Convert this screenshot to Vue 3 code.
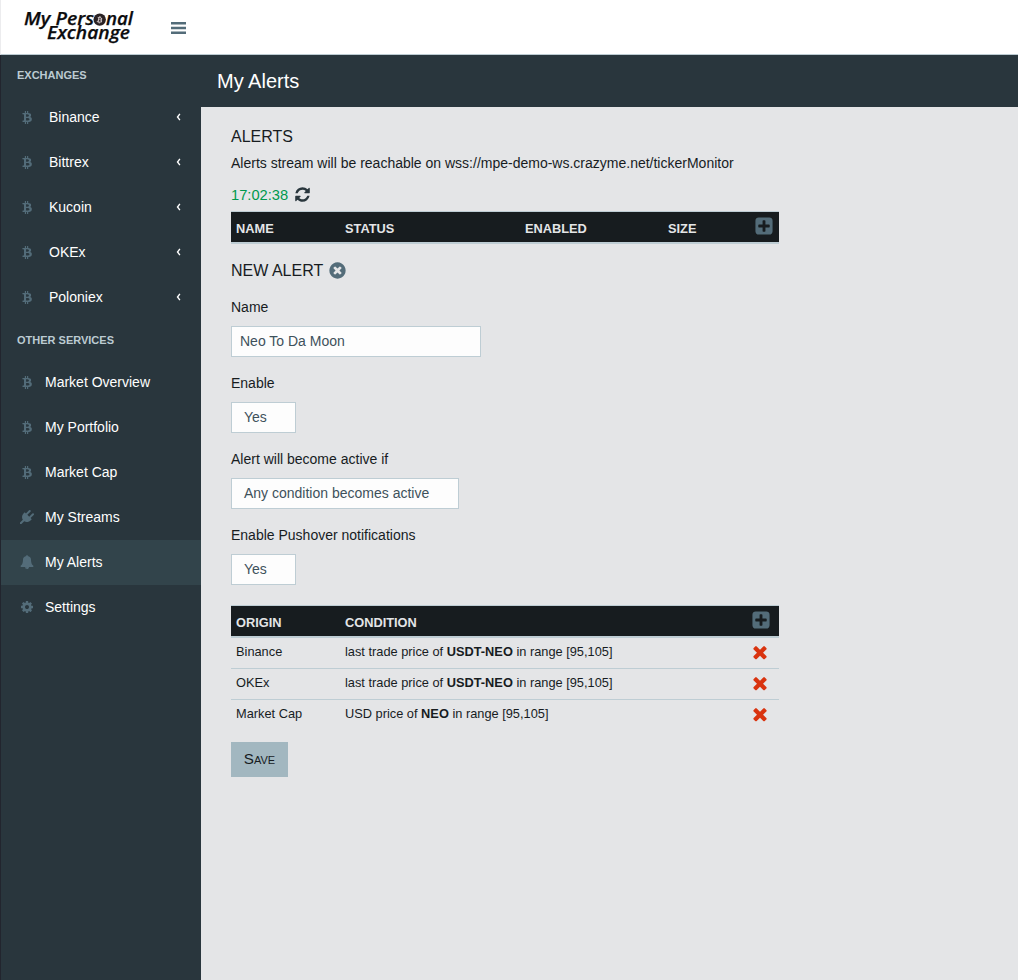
<script setup>
const exchanges = ['Binance', 'Bittrex', 'Kucoin', 'OKEx', 'Poloniex']

const services = [
  { label: 'Market Overview', icon: 'btc' },
  { label: 'My Portfolio', icon: 'btc' },
  { label: 'Market Cap', icon: 'btc' },
  { label: 'My Streams', icon: 'plug' },
  { label: 'My Alerts', icon: 'bell', active: true },
  { label: 'Settings', icon: 'cog' },
]

const conditions = [
  { origin: 'Binance', before: 'last trade price of', pair: 'USDT-NEO', after: 'in range [95,105]' },
  { origin: 'OKEx', before: 'last trade price of', pair: 'USDT-NEO', after: 'in range [95,105]' },
  { origin: 'Market Cap', before: 'USD price of', pair: 'NEO', after: 'in range [95,105]' },
]
</script>

<template>
  <svg class="defs" aria-hidden="true">
    <symbol id="i-btc" viewBox="0 0 1280 1792">
      <path transform="translate(0 1536) scale(1 -1)" d="M1167 896q18 -182 -131 -258q117 -28 175 -103t45 -214q-7 -71 -32.5 -125t-64.5 -89t-97 -58.5t-121.5 -34.5t-145.5 -15v-255h-154v251q-80 0 -122 1v-252h-154v255q-18 0 -54 0.5t-55 0.5h-200l31 183h111q50 0 58 51v402h16q-6 1 -16 1v287q-13 68 -89 68h-111v164l212 -1q64 0 97 1v252h154v-247q82 2 122 2v245h154v-252q79 -7 140 -22.5t113 -45t82.5 -78t36.5 -114.5zM952 351q0 36 -15 64t-37 46t-57.5 30.5t-65.5 18.5t-74 9t-69 3t-64.5 -1t-47.5 -1v-338q8 0 37 -0.5t48 -0.5t53 1.5t58.5 4t57 8.5t55.5 14t47.5 21t39.5 30t24.5 40t9.5 51zM881 827q0 33 -12.5 58.5t-30.5 42t-48 28t-55 16.5t-61.5 8t-58 2.5t-54 -1t-39.5 -0.5v-307q5 0 34.5 -0.5t46.5 0t50 2t55 5.5t51.5 11t48.5 18.5t37 27t27 38.5t9 51z" />
    </symbol>
    <symbol id="i-plug" viewBox="0 0 1792 1792">
      <path d="M1755 453q37 38 37 90.5t-37 90.5l-401 400 150 150-160 160q-163 163-389.5 186.5t-411.5-100.5l-362 362h-181v-181l362-362q-124-185-100.5-411.5t186.5-389.5l160-160 150 150 400-401q38-37 91-37t90 37 37 90.5-37 90.5l-400 401 234 234 401-400q38-37 91-37t90 37z" />
    </symbol>
    <symbol id="i-bell" viewBox="0 0 1792 1792">
      <path d="M912 1696q0-16-16-16-59 0-101.5-42.5t-42.5-101.5q0-16-16-16t-16 16q0 73 51.5 124.5t124.5 51.5q16 0 16-16zm816-288q0 52-38 90t-90 38h-448q0 106-75 181t-181 75-181-75-75-181h-448q-52 0-90-38t-38-90q50-42 91-88t85-119.5 74.5-158.5 50-206 19.5-260q0-152 117-282.5t307-158.5q-8-19-8-39 0-40 28-68t68-28 68 28 28 68q0 20-8 39 190 28 307 158.5t117 282.5q0 139 19.5 260t50 206 74.5 158.5 85 119.5 91 88z" />
    </symbol>
    <symbol id="i-cog" viewBox="0 0 1792 1792">
      <path d="M1152 896q0-106-75-181t-181-75-181 75-75 181 75 181 181 75 181-75 75-181zm512-109v222q0 12-8 23t-20 13l-185 28q-19 54-39 91 35 50 107 138 10 12 10 25t-9 23q-27 37-99 108t-94 71q-12 0-26-9l-138-108q-44 23-91 38-16 136-29 186-7 28-36 28h-222q-14 0-24.5-8.5t-11.5-21.5l-28-184q-49-16-90-37l-141 107q-10 9-25 9-14 0-25-11-126-114-165-168-7-10-7-23 0-12 8-23 15-21 51-66.5t54-70.5q-27-50-41-99l-183-27q-13-2-21-12.5t-8-23.5v-222q0-12 8-23t19-13l186-28q14-46 39-92-40-57-107-138-10-12-10-24 0-10 9-23 26-36 98.5-107.5t94.5-71.5q13 0 26 10l138 107q44-23 91-38 16-136 29-186 7-28 36-28h222q14 0 24.5 8.5t11.5 21.5l28 184q49 16 90 37l142-107q9-9 24-9 13 0 25 10 129 119 165 170 7 8 7 22 0 12-8 23-15 21-51 66.5t-54 70.5q26 50 41 98l183 28q13 2 21 12.5t8 23.5z" />
    </symbol>
    <symbol id="i-refresh" viewBox="0 0 1792 1792">
      <path d="M1639 1056q0 5-1 7-64 268-268 434.5t-478 166.5q-146 0-282.5-55t-243.5-157l-129 129q-19 19-45 19t-45-19-19-45v-448q0-26 19-45t45-19h448q26 0 45 19t19 45-19 45l-137 137q71 66 161 102t187 36q134 0 250-65t186-179q11-17 53-117 8-23 30-23h192q13 0 22.5 9.5t9.5 22.5zm25-800v448q0 26-19 45t-45 19h-448q-26 0-45-19t-19-45 19-45l138-138q-148-137-349-137-134 0-250 65t-186 179q-11 17-53 117-8 23-30 23h-199q-13 0-22.5-9.5t-9.5-22.5v-7q65-268 270-434.5t480-166.5q146 0 284 55.5t245 156.5l130-129q19-19 45-19t45 19 19 45z" />
    </symbol>
    <symbol id="i-times" viewBox="0 0 1792 1792">
      <path d="M1490 1322q0 40-28 68l-136 136q-28 28-68 28t-68-28l-294-294-294 294q-28 28-68 28t-68-28l-136-136q-28-28-28-68t28-68l294-294-294-294q-28-28-28-68t28-68l136-136q28-28 68-28t68 28l294 294 294-294q28-28 68-28t68 28l136 136q28 28 28 68t-28 68l-294 294 294 294q28 28 28 68z" />
    </symbol>
    <symbol id="i-plus" viewBox="0 0 1792 1792">
      <path d="M1408 960v-128q0-26-19-45t-45-19h-320v-320q0-26-19-45t-45-19h-128q-26 0-45 19t-19 45v320h-320q-26 0-45 19t-19 45v128q0 26 19 45t45 19h320v320q0 26 19 45t45 19h128q26 0 45-19t19-45v-320h320q26 0 45-19t19-45zm256-544v960q0 119-84.5 203.5t-203.5 84.5h-960q-119 0-203.5-84.5t-84.5-203.5v-960q0-119 84.5-203.5t203.5-84.5h960q119 0 203.5 84.5t84.5 203.5z" />
    </symbol>
    <symbol id="i-close" viewBox="0 0 1792 1792">
      <path d="M1277 1122q0-26-19-45l-181-181 181-181q19-19 19-45 0-27-19-46l-90-90q-19-19-46-19-26 0-45 19l-181 181-181-181q-19-19-45-19-27 0-46 19l-90 90q-19 19-19 46 0 26 19 45l181 181-181 181q-19 19-19 45 0 27 19 46l90 90q19 19 46 19 26 0 45-19l181-181 181 181q19 19 45 19 27 0 46-19l90-90q19-19 19-46zm387-226q0 209-103 385.5t-279.5 279.5-385.5 103-385.5-103-279.5-279.5-103-385.5 103-385.5 279.5-279.5 385.5-103 385.5 103 279.5 279.5 103 385.5z" />
    </symbol>
  </svg>

  <div class="page">
    <header class="topbar">
      <svg class="logo" width="116" height="40" viewBox="0 0 116 40">
        <g class="logo-text">
          <text x="4" y="20" textLength="70" lengthAdjust="spacingAndGlyphs">My Pers</text>
          <text x="86" y="20" textLength="27" lengthAdjust="spacingAndGlyphs">nal</text>
          <text x="27" y="34" textLength="83" lengthAdjust="spacingAndGlyphs">Exchange</text>
        </g>
        <circle cx="79.7" cy="14.6" r="6.2" fill="#2a2224" />
        <use href="#i-btc" x="76.7" y="10.6" width="6" height="8" fill="#c9bfc0" transform="rotate(12 79.7 14.6)" />
      </svg>
      <svg class="bars" width="15" height="12" viewBox="0 0 15 12">
        <path d="M0 0h15v2.4H0zM0 4.8h15v2.4H0zM0 9.6h15v2.4H0z" />
      </svg>
    </header>

    <div class="body">
      <nav class="sidebar">
        <h2>EXCHANGES</h2>
        <a v-for="name in exchanges" :key="name" class="item exchange">
          <svg class="ico"><use href="#i-btc" /></svg>
          <span>{{ name }}</span>
          <svg class="angle" width="5" height="8" viewBox="0 0 5 8"><path d="M3.9 0.8L1.5 4l2.4 3.2" /></svg>
        </a>
        <h2>OTHER SERVICES</h2>
        <a v-for="s in services" :key="s.label" class="item" :class="{ active: s.active }">
          <svg class="ico"><use :href="'#i-' + s.icon" /></svg>
          <span>{{ s.label }}</span>
        </a>
      </nav>

      <main>
        <h1>My Alerts</h1>
        <section class="content">
          <h3>ALERTS</h3>
          <p class="stream">Alerts stream will be reachable on wss://mpe-demo-ws.crazyme.net/tickerMonitor</p>
          <div class="clock">
            <span>17:02:38</span>
            <svg class="refresh"><use href="#i-refresh" /></svg>
          </div>

          <div class="table alerts">
            <div class="head">
              <span>NAME</span><span>STATUS</span><span>ENABLED</span><span>SIZE</span>
              <svg class="plus"><use href="#i-plus" /></svg>
            </div>
          </div>

          <h3 class="new">NEW ALERT <svg class="close"><use href="#i-close" /></svg></h3>

          <label>Name</label>
          <div class="field name">Neo To Da Moon</div>
          <label>Enable</label>
          <div class="field yes">Yes</div>
          <label>Alert will become active if</label>
          <div class="field any">Any condition becomes active</div>
          <label>Enable Pushover notifications</label>
          <div class="field yes">Yes</div>

          <div class="table conditions">
            <div class="head">
              <span>ORIGIN</span><span>CONDITION</span>
              <svg class="plus"><use href="#i-plus" /></svg>
            </div>
            <div v-for="c in conditions" :key="c.origin" class="row">
              <span>{{ c.origin }}</span>
              <span>{{ c.before }} <b>{{ c.pair }}</b> {{ c.after }}</span>
              <svg class="remove"><use href="#i-times" /></svg>
            </div>
          </div>

          <button class="save">Save</button>
        </section>
      </main>
    </div>
  </div>
</template>

<style>
body {
  background: #e4e5e7;
}
</style>

<style scoped>
.defs {
  position: absolute;
  width: 0;
  height: 0;
}
.page {
  box-sizing: border-box;
  height: 980px;
  overflow: hidden;
  display: flex;
  flex-direction: column;
  font-family: "Liberation Sans", Arial, sans-serif;
  font-size: 14px;
  color: #171c1f;
}
.topbar {
  box-sizing: border-box;
  height: 55px;
  flex: none;
  display: flex;
  background: #fff;
  border-bottom: 1px solid #bccbd2;
  border-left: 1px solid #ececee;
}
.logo {
  margin: 5px 0 0 19px;
}
.logo-text {
  font: italic 600 18px "Open Sans", "Noto Sans", sans-serif;
  fill: #0b0b0d;
  stroke: #0b0b0d;
  stroke-width: 0.25;
}
.bars {
  margin: 22px 0 0 35px;
  fill: #536c79;
}
.body {
  flex: 1;
  display: flex;
}
.sidebar {
  box-sizing: border-box;
  width: 201px;
  flex: none;
  background: #29363d;
  border-left: 1px solid #22252e;
}
.sidebar h2 {
  margin: 0;
  height: 40px;
  padding-left: 16px;
  font-size: 11px;
  line-height: 40px;
  color: #bccbd2;
}
.item {
  box-sizing: border-box;
  display: flex;
  align-items: center;
  height: 45px;
  padding: 0 0 1px 19px;
  color: #fff;
  line-height: 42px;
}
.item.active {
  background: #32444b;
}
.ico {
  width: 14px;
  height: 14px;
  margin-right: 11px;
  fill: #536c79;
}
.exchange .ico {
  margin-right: 15px;
}
.angle {
  margin: 0 20px 1px auto;
  fill: none;
  stroke: #fff;
  stroke-width: 1.4;
}
main {
  flex: 1;
}
h1 {
  margin: 0;
  height: 52px;
  padding-left: 16px;
  background: #29363d;
  color: #fff;
  font-size: 20px;
  font-weight: 400;
  line-height: 52px;
}
.content {
  width: 548px;
  padding: 20px 0 0 30px;
}
h3 {
  margin: 0;
  font-size: 16px;
  font-weight: 400;
  line-height: 20px;
}
.stream {
  margin: 7px 0 0;
  line-height: 18px;
  white-space: nowrap;
}
.clock {
  display: flex;
  align-items: center;
  height: 20px;
  margin: 13px 0 6px;
  font-size: 14.7px;
  color: #00994d;
}
.refresh {
  width: 17px;
  height: 17px;
  margin: 0 0 1px 6px;
  fill: #29363d;
}
.table {
  border-top: 1px solid #becdd4;
  font-size: 12.8px;
}
.head,
.row {
  display: grid;
  height: 30px;
  line-height: 33px;
  padding-left: 5px;
}
.head {
  background: #171c1f;
  color: #e4e5e7;
  font-weight: 700;
  border-bottom: 2px solid #becdd4;
}
.alerts .head {
  grid-template-columns: 109px 180px 143px 85px 1fr;
}
.conditions .head,
.conditions .row {
  grid-template-columns: 109px 407px 1fr;
}
.plus {
  width: 20px;
  height: 20px;
  margin-top: 4px;
  fill: #536c79;
}
.alerts .plus {
  margin-left: 1px;
}
.conditions .plus {
  margin-left: -1px;
}
.row {
  line-height: 28px;
}
.row + .row {
  border-top: 1px solid #becdd4;
}
.remove {
  width: 20px;
  height: 20px;
  margin: 4px 0 0 -2px;
  fill: #d9330f;
}
.new {
  display: flex;
  align-items: center;
  gap: 5px;
  margin: 17px 0 18px;
}
.close {
  width: 19px;
  height: 19px;
  margin-bottom: 1px;
  fill: #536c79;
}
label {
  display: block;
  height: 16px;
  line-height: 16px;
  margin-bottom: 11px;
}
.field {
  box-sizing: border-box;
  height: 31px;
  margin-bottom: 18px;
  padding-left: 12px;
  line-height: 28px;
  border: 1px solid #becdd4;
  background: #fdfdfd;
  color: #3e515b;
}
.field.name {
  width: 250px;
  padding-left: 8px;
}
.field.yes {
  width: 65px;
}
.field.any {
  width: 228px;
}
.conditions {
  margin-top: 20px;
}
.save {
  display: block;
  width: 57px;
  height: 35px;
  margin-top: 12px;
  padding: 0 0 2px;
  border: 0;
  background: #a2b7c0;
  color: #171c1f;
  font: 15.2px "Liberation Sans", Arial, sans-serif;
  font-variant: small-caps;
}
</style>
